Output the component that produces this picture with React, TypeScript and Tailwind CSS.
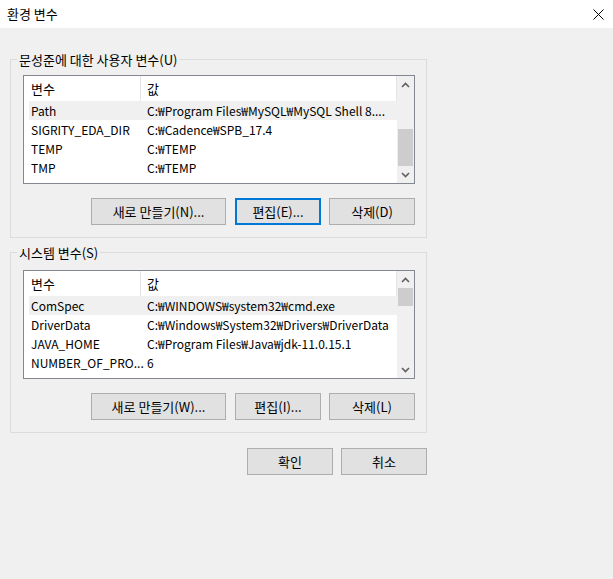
const font = {
  fontFamily: '"Segoe UI", "Noto Sans CJK KR", "Noto Sans", sans-serif',
}

type Row = { name: string; value: string }

const userVars: Row[] = [
  { name: 'Path', value: 'C:₩Program Files₩MySQL₩MySQL Shell 8....' },
  { name: 'SIGRITY_EDA_DIR', value: 'C:₩Cadence₩SPB_17.4' },
  { name: 'TEMP', value: 'C:₩TEMP' },
  { name: 'TMP', value: 'C:₩TEMP' },
]

const systemVars: Row[] = [
  { name: 'ComSpec', value: 'C:₩WINDOWS₩system32₩cmd.exe' },
  { name: 'DriverData', value: 'C:₩Windows₩System32₩Drivers₩DriverData' },
  { name: 'JAVA_HOME', value: 'C:₩Program Files₩Java₩jdk-11.0.15.1' },
  { name: 'NUMBER_OF_PRO...', value: '6' },
]

const Chevron = ({ down }: { down?: boolean }) => (
  <svg width="9" height="6" viewBox="0 0 9 6" className="block">
    <polyline
      points={down ? '1,1 4.5,4.5 8,1' : '1,5 4.5,1.5 8,5'}
      fill="none"
      stroke="#606060"
      strokeWidth="1.6"
    />
  </svg>
)

const Scrollbar = ({ atTop }: { atTop: boolean }) => (
  <div className="w-[17px] h-full flex flex-col bg-[#f0f0f0] shrink-0">
    <div className="h-[17px] flex items-center justify-center">
      <Chevron />
    </div>
    <div className="flex-1 flex flex-col px-[1px]">
      {atTop ? (
        <>
          <div className="h-[18px] bg-[#cdcdcd]" />
          <div className="flex-1" />
        </>
      ) : (
        <>
          <div className="flex-1" />
          <div className="h-[37px] bg-[#cdcdcd]" />
        </>
      )}
    </div>
    <div className="h-[17px] flex items-center justify-center">
      <Chevron down />
    </div>
  </div>
)

const VarList = ({ rows, atTop }: { rows: Row[]; atTop: boolean }) => (
  <div className="h-[109px] w-[392px] border border-[#828790] bg-white flex">
    <div className="flex-1 flex flex-col overflow-hidden">
      <div className="h-[25px] flex shrink-0 text-[13px] text-black">
        <div className="w-[117px] pl-[7px] flex items-center border-r border-[#e5e5e5]">변수</div>
        <div className="flex-1 pl-[6px] flex items-center border-r border-[#e5e5e5]">값</div>
      </div>
      <div className="pl-[5px]">
        {rows.map((r, i) => (
          <div
            key={r.name}
            className={`h-[19px] flex items-center pl-[2px] text-[12px] text-black whitespace-nowrap ${
              i === 0 ? 'bg-[#f0f0f0]' : ''
            }`}
          >
            <div className="w-[116px] shrink-0">{r.name}</div>
            <div className="overflow-hidden">{r.value}</div>
          </div>
        ))}
      </div>
    </div>
    <Scrollbar atTop={atTop} />
  </div>
)

const Button = ({
  label,
  wide,
  focused,
}: {
  label: string
  wide?: boolean
  focused?: boolean
}) => (
  <button
    className={`h-[27px] ${wide ? 'w-[135px]' : 'w-[86px]'} bg-[#e1e1e1] text-[13px] text-black flex items-center justify-center ${
      focused ? 'border-2 border-[#0078d7]' : 'border border-[#adadad]'
    }`}
  >
    {label}
  </button>
)

const Group = ({
  title,
  rows,
  atTop,
  buttons,
  className,
  listGap,
}: {
  title: string
  rows: Row[]
  atTop: boolean
  buttons: { label: string; wide?: boolean; focused?: boolean }[]
  className: string
  listGap: string
}) => (
  <fieldset className={`w-[417px] border border-[#dcdcdc] px-0 pb-[12px] ${className}`}>
    <legend className="ml-[6px] px-[2px] leading-[17px] text-[13px] text-black">{title}</legend>
    <div className={`pl-[12px] pr-[11px] ${listGap}`}>
      <VarList rows={rows} atTop={atTop} />
      <div className="mt-[14px] flex justify-end">
        {buttons.map((b, i) => (
          <div key={b.label} className={i === 0 ? '' : i === 1 ? 'ml-[9px]' : 'ml-[8px]'}>
            <Button {...b} />
          </div>
        ))}
      </div>
    </div>
  </fieldset>
)

export default function App() {
  return (
    <div className="w-[613px] h-[579px] bg-[#f0f0f0] flex flex-col overflow-hidden" style={font}>
      {/* title bar */}
      <div className="h-[28px] bg-white flex items-center justify-between pl-[7px] pr-[9px] shrink-0">
        <span className="text-[13px] text-black">환경 변수</span>
        <svg width="11" height="11" viewBox="0 0 11 11">
          <path d="M0.5 0.5 L10.5 10.5 M10.5 0.5 L0.5 10.5" stroke="#000" strokeWidth="1" />
        </svg>
      </div>

      <div className="pl-[10px] flex flex-col">
        <Group
          title="문성준에 대한 사용자 변수(U)"
          rows={userVars}
          atTop={false}
          className="mt-[23px]"
          listGap="pt-[7px]"
          buttons={[
            { label: '새로 만들기(N)...', wide: true },
            { label: '편집(E)...', focused: true },
            { label: '삭제(D)' },
          ]}
        />
        <Group
          title="시스템 변수(S)"
          rows={systemVars}
          atTop={true}
          className="mt-[6px]"
          listGap="pt-[9px]"
          buttons={[
            { label: '새로 만들기(W)...', wide: true },
            { label: '편집(I)...' },
            { label: '삭제(L)' },
          ]}
        />
        <div className="w-[417px] mt-[15px] flex justify-end gap-[8px]">
          <Button label="확인" />
          <Button label="취소" />
        </div>
      </div>
    </div>
  )
}
